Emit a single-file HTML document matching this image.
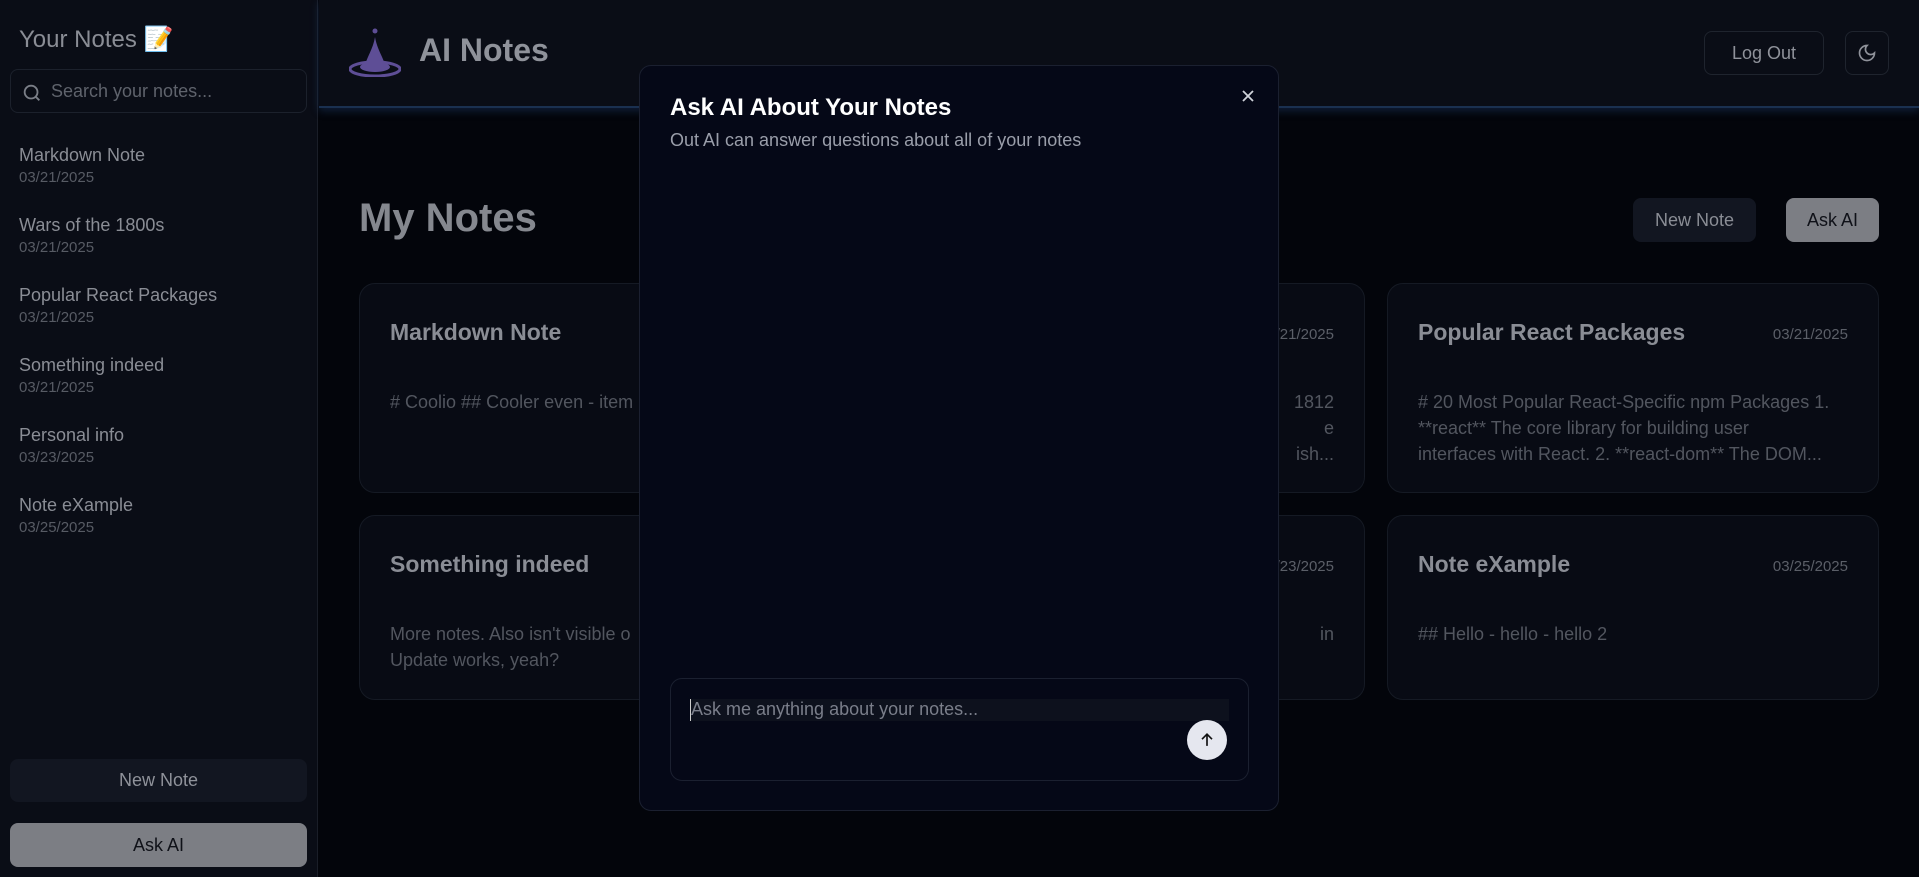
<!DOCTYPE html>
<html><head><meta charset="utf-8"><style>
*{box-sizing:border-box;margin:0;padding:0}
body{width:1919px;height:877px;overflow:hidden;background:#03050b;font-family:"Liberation Sans",sans-serif;position:relative}
.sb{position:absolute;left:0;top:0;width:318px;height:877px;background:#0a0d16;border-right:1px solid #1a1e28}
.sb h2{position:absolute;left:19px;top:25px;font-size:24px;font-weight:normal;color:#8a8d95}
.search{position:absolute;left:10px;top:69px;width:297px;height:44px;border:1px solid #1c212c;border-radius:8px;color:#5f636c;font-size:18px;padding:11px 0 0 40px}
.search svg{position:absolute;left:10px;top:12px}
.item{position:absolute;left:19px}
.item .t{font-size:18px;color:#8a8d95}
.item .d{font-size:15px;color:#575b64;margin-top:3px}
.btn{position:absolute;border-radius:8px;text-align:center;font-size:18px}
.hdr{position:absolute;left:319px;top:0;right:0;height:108px;background:#0a0d16;border-bottom:2px solid #1a3050;box-shadow:0 3px 8px rgba(40,80,140,.35)}
.card{position:absolute;width:492px;background:#080b14;border:1px solid #151a24;border-radius:16px}
.card .ti{position:absolute;left:30px;top:35px;font-size:23px;font-weight:bold;color:#8a8d95}
.card .da{position:absolute;right:30px;top:42px;font-size:15px;color:#5b5f68}
.card .bo{position:absolute;left:30px;top:105px;right:30px;font-size:18px;line-height:26px;color:#52565f}
.modal{position:absolute;left:639px;top:65px;width:640px;height:746px;background:#050817;border:1px solid #1b2030;border-radius:12px}
</style></head><body>
<div class="sb">
<h2>Your Notes 📝</h2>
<div class="search"><svg width="22" height="22" viewBox="0 0 24 24" fill="none" stroke="#7a7e87" stroke-width="2"><circle cx="11" cy="11" r="7"/><path d="M20 20l-4-4"/></svg>Search your notes...</div>
<div class="item" style="top:145px"><div class="t">Markdown Note</div><div class="d">03/21/2025</div></div>
<div class="item" style="top:215px"><div class="t">Wars of the 1800s</div><div class="d">03/21/2025</div></div>
<div class="item" style="top:285px"><div class="t">Popular React Packages</div><div class="d">03/21/2025</div></div>
<div class="item" style="top:355px"><div class="t">Something indeed</div><div class="d">03/21/2025</div></div>
<div class="item" style="top:425px"><div class="t">Personal info</div><div class="d">03/23/2025</div></div>
<div class="item" style="top:495px"><div class="t">Note eXample</div><div class="d">03/25/2025</div></div>
<div class="btn" style="left:10px;top:759px;width:297px;height:43px;background:#121621;color:#8f929a;padding-top:11px">New Note</div>
<div class="btn" style="left:10px;top:823px;width:297px;height:44px;background:#7c7e84;color:#0f1118;padding-top:12px">Ask AI</div>
</div>
<div class="hdr">
<svg style="position:absolute;left:30px;top:27px" width="52" height="50" viewBox="0 0 52 50"><ellipse cx="26" cy="42" rx="25" ry="7" fill="none" stroke="#5e4e96" stroke-width="3"/><ellipse cx="26" cy="40" rx="15" ry="5" fill="#5e4e96"/><path d="M26 10 C24 22 18 30 16 38 L36 38 C34 30 28 22 26 10Z" fill="#5e4e96"/><circle cx="26" cy="4" r="2.5" fill="#5e4e96"/></svg>
<div style="position:absolute;left:100px;top:32px;font-size:32px;font-weight:bold;color:#8f929a">AI Notes</div>
<div class="btn" style="left:1385px;top:31px;width:120px;height:44px;border:1px solid #1f242e;color:#8f929a;padding-top:11px">Log Out</div>
<div class="btn" style="left:1526px;top:31px;width:44px;height:44px;border:1px solid #1f242e"><svg style="margin-top:11px" width="20" height="20" viewBox="0 0 24 24" fill="none" stroke="#8f929a" stroke-width="2"><path d="M12 3a6 6 0 0 0 9 9 9 9 0 1 1-9-9Z"/></svg></div>
</div>
<div style="position:absolute;left:359px;top:196px;font-size:40px;font-weight:bold;color:#85888f">My Notes</div>
<div class="btn" style="left:1633px;top:198px;width:123px;height:44px;background:#121621;color:#8a8d95;padding-top:12px">New Note</div>
<div class="btn" style="left:1786px;top:198px;width:93px;height:44px;background:#7c7e84;color:#0f1118;padding-top:12px">Ask AI</div>
<div class="card" style="left:359px;top:283px;height:210px"><div class="ti">Markdown Note</div><div class="da">03/21/2025</div><div class="bo"># Coolio ## Cooler even - item</div></div>
<div class="card" style="left:873px;top:283px;height:210px"><div class="da">03/21/2025</div><div class="bo" style="text-align:right">1812<br>e<br>ish...</div></div>
<div class="card" style="left:1387px;top:283px;height:210px"><div class="ti">Popular React Packages</div><div class="da">03/21/2025</div><div class="bo" style="right:40px"># 20 Most Popular React-Specific npm Packages 1. **react** The core library for building user<br>interfaces with React. 2. **react-dom** The DOM...</div></div>
<div class="card" style="left:359px;top:515px;height:185px"><div class="ti">Something indeed</div><div class="bo" style="top:105px">More notes. Also isn't visible o<br>Update works, yeah?</div></div>
<div class="card" style="left:873px;top:515px;height:185px"><div class="da">03/23/2025</div><div class="bo" style="text-align:right">in</div></div>
<div class="card" style="left:1387px;top:515px;height:185px"><div class="ti">Note eXample</div><div class="da">03/25/2025</div><div class="bo">## Hello - hello - hello 2</div></div>
<div class="modal">
<div style="position:absolute;left:30px;top:28px;font-size:24px;font-weight:bold;color:#fff">Ask AI About Your Notes</div>
<div style="position:absolute;left:30px;top:64px;font-size:18px;color:#9a9eaa">Out AI can answer questions about all of your notes</div>
<svg style="position:absolute;left:600px;top:22px" width="16" height="16" viewBox="0 0 16 16" stroke="#d0d3da" stroke-width="1.8"><path d="M3 3l10 10M13 3L3 13"/></svg>
<div style="position:absolute;left:30px;top:612px;width:579px;height:103px;border:1px solid #1b2030;border-radius:12px">
<div style="position:absolute;left:19px;top:20px;width:539px;height:22px;background:#0d111d;border-left:1px solid #ccc;font-size:18px;color:#7a7e8a;line-height:20px">Ask me anything about your notes...</div>
<div style="position:absolute;left:516px;top:41px;width:40px;height:40px;border-radius:50%;background:#e5e7ef"><svg style="margin:10px" width="20" height="20" viewBox="0 0 24 24" fill="none" stroke="#111" stroke-width="2"><path d="M12 19V5M6 11l6-6 6 6"/></svg></div>
</div>
</div>
</body></html>
